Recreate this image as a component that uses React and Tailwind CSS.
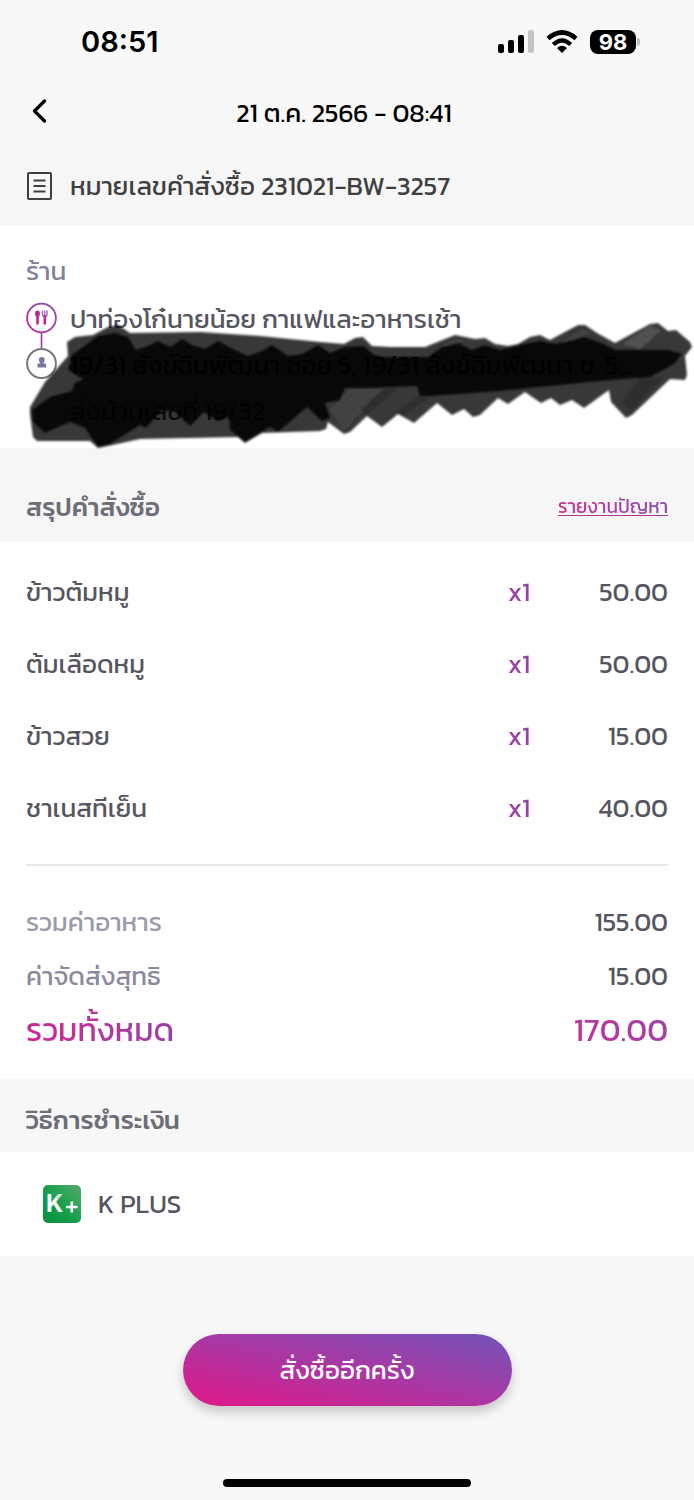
const items = [
  { name: "ข้าวต้มหมู", qty: "x1", price: "50.00" },
  { name: "ต้มเลือดหมู", qty: "x1", price: "50.00" },
  { name: "ข้าวสวย", qty: "x1", price: "15.00" },
  { name: "ชาเนสทีเย็น", qty: "x1", price: "40.00" },
];

function StatusBar() {
  return (
    <div className="flex h-20 items-center justify-between pt-1 pr-[54px] pl-[81px] text-black">
      <span className="font-['Inter'] text-[29px] leading-9 font-semibold">08:51</span>
      <div className="flex items-center gap-3">
        <svg width="36" height="24" viewBox="0 0 36 24" role="img" aria-label="signal">
          <rect x="0" y="14" width="6" height="9" rx="2" />
          <rect x="10" y="10" width="6" height="13" rx="2" />
          <rect x="20" y="5" width="6" height="18" rx="2" />
          <rect x="30" y="0" width="6" height="23" rx="2" fill="#c4c4c4" />
        </svg>
        <svg width="32" height="24" viewBox="0 0 32 24" role="img" aria-label="wifi">
          <path d="M2 8.500Q16 -3.500 30 8.500" fill="none" stroke="#000" strokeWidth="4.600" />
          <path d="M7.300 14.500Q16 6.500 24.700 14.500" fill="none" stroke="#000" strokeWidth="4.400" />
          <path d="M16 23L11 18Q16 13.500 21 18Z" />
        </svg>
        <div className="flex items-center gap-px">
          <span className="flex h-6 w-[46px] items-center justify-center rounded-lg bg-black font-['Inter'] text-[22px] leading-6 font-bold text-white">
            98
          </span>
          <span className="h-2 w-[3px] rounded-r-full bg-[#bdbdbd]" />
        </div>
      </div>
    </div>
  );
}

function Redaction() {
  return (
    <svg
      className="pointer-events-none absolute inset-x-0 top-[94px] h-[130px] w-full"
      viewBox="0 320 694 130"
      preserveAspectRatio="none"
      aria-hidden="true"
    >
      <defs>
        <filter id="soft" x="-5%" y="-5%" width="110%" height="110%">
          <feGaussianBlur stdDeviation="1.2" />
        </filter>
      </defs>
      <g filter="url(#soft)">
        <path
          fill="#000"
          fillOpacity="0.78"
          d="M30 414L33 437L37 441H90L98 448L108 446L140 439L238 437L245 443L262 433L320 431L326 429L328 422L344 434L350 432L367 416L382 427L398 414L414 423L437 403L452 415L464 409L473 417L480 415L498 398L508 404L525 392L541 403L551 398L560 405L572 400L584 408L609 390L611 402L626 418L632 415L670 379L685 380L687 375L685 356L692 347L690 342L676 330L668 331L658 323L650 324L615 343L597 333L585 325L578 325L550 340L540 335L530 337L518 344L508 346L495 344L485 338L475 339L465 337L455 335L440 341L425 347L390 347L372 346L363 337L355 338L344 344L320 342L260 336L200 332L130 333L118 325L108 327L93 335L75 337L67 342L68 356L45 382L30 407Z"
        />
        <path
          fill="#000"
          fillOpacity="0.86"
          d="M72 355L98 336L115 333L128 337L136 350L148 346L158 341L170 347L182 339L192 345L205 349L218 341L235 350L248 356L262 351L272 345L288 356L302 354L318 345L330 353L345 347L364 346L374 355L384 357H428L442 347L458 343L472 350L485 345L500 350L520 345L540 341L555 344L585 337L604 344L615 350H668L682 354L674 364L650 377L610 380L500 391L430 396H420L417 386L365 388L345 388L340 400L325 403L330 418L322 421L307 407L278 432L270 427L245 442L230 430L229 417L218 421L204 412L190 426L175 412L162 410L146 428L140 425L110 444L98 447L85 428L70 422L58 427L45 433L33 422L32 410L50 397L72 391L74 384L83 379L68 370Z"
        />
        <g fill="#fff" fillOpacity="0.05">
          <path d="M330 410L349 389H382L344 431Z" />
          <path d="M560 343L582 329L590 332L572 342Z" />
          <path d="M440 347L456 338L464 341L450 347Z" />
        </g>
        <path fill="#fff" fillOpacity="0.12" d="M622 344L650 326L661 330L640 349Z" />
        <g fill="#000" fillOpacity="0.18">
          <path d="M386 388H398L366 416L360 408Z" />
          <path d="M418 396L430 398L402 416L396 412Z" />
          <path d="M640 378L664 377L630 412L622 402Z" />
        </g>
      </g>
    </svg>
  );
}

export default function App() {
  return (
    <div className="flex min-h-screen flex-col bg-[#f8f8f8] font-['Kanit','Prompt','Inter','Noto_Sans_Thai','Noto_Sans',sans-serif] text-[26px] leading-9 text-[#56565f]">
      <StatusBar />
      <header className="grid h-[66px] grid-cols-[72px_1fr_78px] items-center text-black">
        <button type="button" aria-label="back" className="flex h-11 w-[72px] items-center pb-1 pl-8">
          <svg width="15" height="24" viewBox="0 0 15 24" fill="none" stroke="#000" strokeWidth="3.200" strokeLinecap="round" strokeLinejoin="round" aria-hidden="true">
            <path d="M12.500 2L2.500 12L12.500 22" />
          </svg>
        </button>
        <h1 className="text-center">21 ต.ค. 2566 - 08:41</h1>
      </header>

      <section className="flex h-20 items-center gap-[18px] bg-[#f6f6f6] px-[27px] text-[#3f3f42]">
        <svg width="25" height="28" viewBox="0 0 25 28" fill="none" stroke="#3f3f42" strokeWidth="2" aria-hidden="true">
          <rect x="1" y="1" width="23" height="26" rx="1" />
          <path d="M6.500 8.500H18.500M6.500 14H18.500M6.500 19.500H18.500" />
        </svg>
        <p>หมายเลขคำสั่งซื้อ 231021-BW-3257</p>
      </section>

      <section className="relative h-[222px] bg-white px-[26px] pt-[27px]">
        <h2 className="text-[#82829a]">ร้าน</h2>
        <div className="flex gap-[13px] pt-[7px]">
          <svg className="mt-[6px] shrink-0" width="31" height="78" viewBox="0 0 31 78" fill="none" aria-hidden="true">
            <defs>
              <linearGradient id="ring" x1="0" y1="1" x2="1" y2="0">
                <stop offset="0" stopColor="#d41f91" />
                <stop offset="1" stopColor="#7d4fb3" />
              </linearGradient>
            </defs>
            <circle cx="15.500" cy="16" r="14.400" stroke="url(#ring)" strokeWidth="1.800" />
            <path d="M15.500 30.500V47" stroke="#a636a5" strokeWidth="1.600" />
            <circle cx="15.500" cy="61.500" r="14.400" stroke="#77777d" strokeWidth="2" />
            <ellipse cx="11.500" cy="11.700" rx="2.400" ry="3.200" fill="#b72a9d" />
            <path d="M11.500 14V21.500" stroke="#b72a9d" strokeWidth="2.600" strokeLinecap="round" />
            <path d="M16.500 8.500V12.500Q16.500 14.500 18.800 14.500Q21 14.500 21 12.500V8.500M18.800 8.500V14" stroke="#8b62ba" strokeWidth="1.300" />
            <path d="M18.800 14.500V21.500" stroke="#b72a9d" strokeWidth="2.600" strokeLinecap="round" />
            <circle cx="15.800" cy="58" r="2.900" fill="#77779a" />
            <path d="M14.300 59.500H17.300V61.500H20V65.500H11.500V61.500H14.300Z" fill="#77779a" />
          </svg>
          <div className="min-w-0 flex-1">
            <p className="truncate leading-[46px]">ปาท่องโก๋นายน้อย กาแฟและอาหารเช้า</p>
            <p className="truncate leading-[46px] text-black">19/31 สังข์ฉิมพัฒนา ซอย 5, 19/31 สังข์ฉิมพัฒนา ซ. 5...</p>
            <p className="truncate leading-[46px] text-[#33333d]">ส่งบ้านเลขที่ 19/32</p>
          </div>
        </div>
        <Redaction />
      </section>

      <section className="flex h-[94px] items-center justify-between bg-[#f6f6f6] px-[26px] pt-6">
        <h2 className="font-medium text-[#6d6d76]">สรุปคำสั่งซื้อ</h2>
        <a href="#report" className="bg-gradient-to-r from-[#cf2593] to-[#8749ae] bg-clip-text text-[19px] text-transparent underline decoration-[#ab37a4] decoration-1 underline-offset-2">
          รายงานปัญหา
        </a>
      </section>

      <section className="bg-white px-[26px] pt-[14px] pb-[22px]">
        <table className="w-full">
          <tbody>
            {items.map((item) => (
              <tr key={item.name} className="h-[72px]">
                <th scope="row" className="text-left font-normal">{item.name}</th>
                <td className="w-16 text-left">
                  <span className="bg-gradient-to-r from-[#a53aa5] to-[#8f45ab] bg-clip-text text-transparent">{item.qty}</span>
                </td>
                <td className="w-24 text-right">{item.price}</td>
              </tr>
            ))}
          </tbody>
        </table>
        <hr className="mt-5 border-t-2 border-[#e8e8ec]" />
        <dl className="mt-[29px]">
          <div className="flex h-[54px] items-center justify-between">
            <dt className="text-[#9a9aac]">รวมค่าอาหาร</dt>
            <dd>155.00</dd>
          </div>
          <div className="flex h-[54px] items-center justify-between">
            <dt className="text-[#8a8a9d]">ค่าจัดส่งสุทธิ</dt>
            <dd>15.00</dd>
          </div>
          <div className="flex h-[54px] items-center justify-between text-[32px] leading-[54px]">
            <dt className="bg-gradient-to-r from-[#cf2390] to-[#993fa8] bg-clip-text text-transparent">รวมทั้งหมด</dt>
            <dd className="bg-gradient-to-tr from-[#c92a98] to-[#9444a8] bg-clip-text text-transparent">170.00</dd>
          </div>
        </dl>
      </section>

      <section className="flex h-[73px] items-center bg-[#f7f7f7] px-[26px] pt-2">
        <h2 className="font-medium text-[#6d6d76]">วิธีการชำระเงิน</h2>
      </section>

      <section className="flex h-[104px] items-center gap-[17px] bg-white px-[43px]">
        <svg width="38" height="38" viewBox="0 0 38 38" role="img" aria-label="K PLUS logo">
          <defs>
            <linearGradient id="kplus" x1="0" y1="1" x2="1" y2="0">
              <stop offset="0" stopColor="#0b8c40" />
              <stop offset="0.450" stopColor="#14a04c" />
              <stop offset="1" stopColor="#58a86e" />
            </linearGradient>
          </defs>
          <rect width="38" height="38" rx="5" fill="url(#kplus)" />
          <text x="3" y="27" fill="#fff" className="font-['Inter'] text-[24px] font-bold">K</text>
          <path d="M14 9.500H22L17 16L13.500 13Z" fill="#14a04c" fillOpacity="0.25" />
          <path d="M23 22H34.500M28.800 16.500V27.500" stroke="#fff" strokeWidth="2.600" />
        </svg>
        <p>K PLUS</p>
      </section>

      <footer className="flex flex-1 flex-col items-center justify-between pt-[78px] pb-[13px]">
        <button type="button" className="h-[72px] w-[329px] rounded-full bg-[linear-gradient(12deg,#d91c8c_8%,#a838a4_52%,#7651b5_96%)] text-white shadow-[0_6px_12px_rgba(0,0,0,0.2)]">
          สั่งซื้ออีกครั้ง
        </button>
        <div className="h-2 w-[248px] rounded-full bg-black" />
      </footer>
    </div>
  );
}
